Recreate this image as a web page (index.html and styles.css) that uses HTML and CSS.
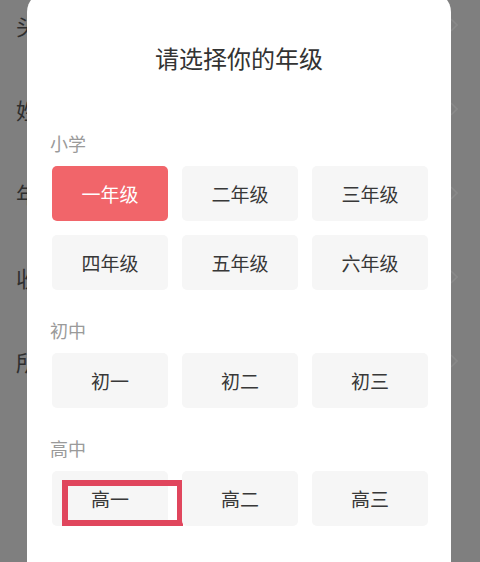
FILE: index.html
```html
<!DOCTYPE html>
<html lang="zh-CN">
<head>
<meta charset="utf-8">
<title>选择年级</title>
<link rel="stylesheet" href="styles.css">
</head>
<body>
<div class="page">
  <ul class="bg-list">
    <li class="bg-row"><span class="bg-text">头</span><svg class="chev" viewBox="0 0 8 14"><path d="M1 1l6 6-6 6" fill="none" stroke="currentColor" stroke-width="1.6"/></svg></li>
    <li class="bg-row"><span class="bg-text">姓</span><svg class="chev" viewBox="0 0 8 14"><path d="M1 1l6 6-6 6" fill="none" stroke="currentColor" stroke-width="1.6"/></svg></li>
    <li class="bg-row"><span class="bg-text">年</span><svg class="chev" viewBox="0 0 8 14"><path d="M1 1l6 6-6 6" fill="none" stroke="currentColor" stroke-width="1.6"/></svg></li>
    <li class="bg-row"><span class="bg-text">收</span><svg class="chev" viewBox="0 0 8 14"><path d="M1 1l6 6-6 6" fill="none" stroke="currentColor" stroke-width="1.6"/></svg></li>
    <li class="bg-row"><span class="bg-text">所</span><svg class="chev" viewBox="0 0 8 14"><path d="M1 1l6 6-6 6" fill="none" stroke="currentColor" stroke-width="1.6"/></svg></li>
  </ul>

  <div class="modal">
    <h1 class="title">请选择你的年级</h1>

    <section class="group">
      <div class="label">小学</div>
      <div class="grid">
        <div class="btn active">一年级</div>
        <div class="btn">二年级</div>
        <div class="btn">三年级</div>
        <div class="btn">四年级</div>
        <div class="btn">五年级</div>
        <div class="btn">六年级</div>
      </div>
    </section>

    <section class="group">
      <div class="label">初中</div>
      <div class="grid">
        <div class="btn">初一</div>
        <div class="btn">初二</div>
        <div class="btn">初三</div>
      </div>
    </section>

    <section class="group">
      <div class="label">高中</div>
      <div class="grid">
        <div class="btn marked"><span class="mark"></span>高一</div>
        <div class="btn">高二</div>
        <div class="btn">高三</div>
      </div>
    </section>
  </div>
</div>
</body>
</html>
```

FILE: styles.css
```css
* { box-sizing: border-box; }
html, body {
  margin: 0;
  padding: 0;
}
body {
  width: 480px;
  height: 562px;
  overflow: hidden;
  background: #7f7f7f;
  font-family: "Noto Sans CJK SC", "Noto Sans", sans-serif;
}
.page {
  position: relative;
  width: 480px;
  height: 562px;
  overflow: hidden;
}
.bg-list {
  list-style: none;
  margin: 0;
  padding: 0;
}
.bg-row {
  display: flex;
  align-items: center;
  justify-content: space-between;
  height: 84px;
  padding: 0 22px 0 16px;
  margin-top: -17px;
  margin-bottom: 17px;
  font-size: 22px;
  color: #2e2e2e;
}
.bg-text {
  display: block;
  width: 22px;
  overflow: hidden;
  white-space: nowrap;
}
.chev {
  width: 8px;
  height: 14px;
  color: #898989;
}
.modal {
  position: absolute;
  left: 27px;
  top: -8px;
  width: 424px;
  bottom: -30px;
  background: #ffffff;
  border-radius: 20px;
  padding: 50px 23px 0 25px;
}
.title {
  margin: 0 0 57px;
  font-size: 24px;
  line-height: 32px;
  font-weight: 400;
  color: #333333;
  text-align: center;
  margin-left: -2px;
}
.group + .group { margin-top: 28px; }
.label {
  font-size: 18px;
  line-height: 24px;
  color: #9a9a9a;
  margin: 0 0 11px -2px;
}
.grid {
  display: grid;
  grid-template-columns: repeat(3, 116px);
  grid-auto-rows: 55px;
  column-gap: 14px;
  row-gap: 14px;
}
.btn {
  position: relative;
  display: flex;
  align-items: center;
  justify-content: center;
  background: #f6f6f6;
  border-radius: 5px;
  font-size: 19px;
  color: #383838;
}
.btn.active {
  background: #f1656a;
  color: #ffffff;
}
.mark {
  position: absolute;
  left: 10px;
  top: 9px;
  width: 121px;
  height: 46px;
  border: 6px solid #e0465d;
}
.btn.marked { justify-content: flex-start; padding-left: 39px; }
```
